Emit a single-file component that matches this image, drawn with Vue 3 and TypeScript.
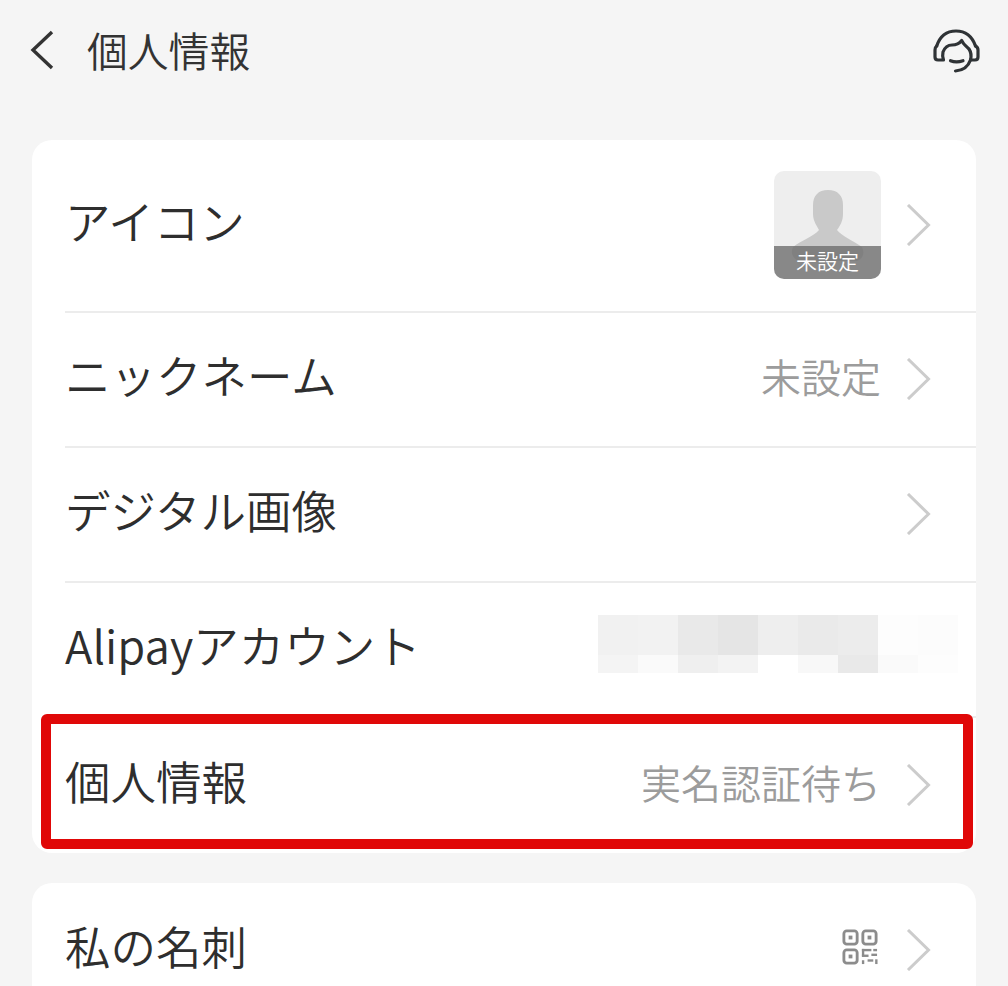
<script setup lang="ts">
interface Row {
  key: string
  label: string
  value?: string
  kind?: 'avatar' | 'mosaic'
  highlight?: boolean
}

const rows: Row[] = [
  { key: 'avatar', label: 'アイコン', kind: 'avatar' },
  { key: 'nick', label: 'ニックネーム', value: '未設定' },
  { key: 'digital', label: 'デジタル画像' },
  { key: 'alipay', label: 'Alipayアカウント', kind: 'mosaic' },
  { key: 'info', label: '個人情報', value: '実名認証待ち', highlight: true },
]

const mosaicTop = ['#f1f1f1', '#f2f2f2', '#e9e9e9', '#e5e5e5', '#eeeeee', '#eaeaea', '#ececec', '#fdfdfd', '#fcfcfc']
const mosaicBottom = ['#f4f4f4', '#fafafa', '#efefef', '#f3f3f3', '#ffffff', '#f8f8f8', '#e9e9e9', '#fafafa', '#fdfdfd']
</script>

<template>
  <div class="page">
    <header class="topbar">
      <svg class="back" viewBox="0 0 24 40" width="24" height="40">
        <path d="M22 2 L3 20 L22 38" fill="none" stroke="#333" stroke-width="3.4" />
      </svg>
      <h1 class="title">個人情報</h1>
      <svg class="service" viewBox="0 0 48 48" width="48" height="48">
        <g fill="none" stroke="#2f3336" stroke-width="3.2" stroke-linecap="round" stroke-linejoin="round">
          <path d="M3.700 20 C7 10 14 5 23 5 C32 5 39 10 42.500 20" />
          <path d="M3.700 20 C2.300 21 2 22 2 24 L2 31 C2 33 3 34 5 34 L10.500 34 C9.500 31 9.500 28 10 26 C12 21 15 19 19 19 C23 19 26 18 28.700 14.500 C30 18 33 20 36 23 C38 26 38.500 30 37.500 34 L42 34 C44 34 45 33 45 31 L45 24 C45 22 44.500 21 42.500 20" />
          <path d="M17.500 34.700 C21 36.200 26 36.200 30 34.700" />
          <path d="M37.500 34 C35 41 30 44.500 22.500 45" />
        </g>
      </svg>
    </header>

    <section class="card">
      <div
        v-for="(row, i) in rows"
        :key="row.key"
        class="row"
        :class="[row.kind ? `row-${row.kind}` : '', { last: i === rows.length - 1 }]"
      >
        <span class="label">{{ row.label }}</span>
        <div class="right">
          <div v-if="row.kind === 'avatar'" class="avatar">
            <svg viewBox="0 0 107 108" width="107" height="108">
              <path
                d="M54 19 C44 19 39 25 39 34 L39 43 C39 50 43 55 45 59 C40 65 28 69 19 76 C16 82 19 88 25 90 L83 90 C89 88 91 82 88 76 C78 69 68 65 63 59 C66 55 69 50 69 43 L69 34 C69 25 64 19 54 19 Z"
                fill="#c9c9c9"
              />
            </svg>
            <span class="avatar-tag">未設定</span>
          </div>
          <div v-else-if="row.kind === 'mosaic'" class="mosaic">
            <i v-for="(c, n) in mosaicTop" :key="'t' + n" class="cell-top" :style="{ background: c }"></i>
            <i v-for="(c, n) in mosaicBottom" :key="'b' + n" class="cell-bottom" :style="{ background: c }"></i>
          </div>
          <span v-else-if="row.value" class="value">{{ row.value }}</span>
          <svg v-if="row.kind !== 'mosaic'" class="chevron" viewBox="0 0 25 42" width="25" height="42">
            <path d="M2 1 L22.500 21 L2 41" fill="none" stroke="#cccccc" stroke-width="3" />
          </svg>
        </div>
        <div v-if="row.highlight" class="highlight"></div>
      </div>
    </section>

    <section class="card second">
      <div class="row row-qr">
        <span class="label">私の名刺</span>
        <div class="right">
          <svg class="qr" viewBox="0 0 38 38" width="36" height="36">
            <g fill="none" stroke="#8c8c8c" stroke-width="3">
              <rect x="2" y="2" width="14" height="14" rx="3" />
              <rect x="22" y="2" width="14" height="14" rx="3" />
              <rect x="2" y="22" width="14" height="14" rx="3" />
            </g>
            <g fill="#8c8c8c">
              <rect x="7" y="7" width="4" height="4" />
              <rect x="27" y="7" width="4" height="4" />
              <rect x="7" y="27" width="4" height="4" />
              <rect x="21" y="21" width="10" height="2.500" />
              <rect x="33" y="21" width="4" height="2.500" />
              <rect x="21" y="21" width="2.500" height="8" />
              <rect x="21" y="27" width="7" height="2.500" />
              <rect x="31" y="26" width="6" height="2.500" />
              <rect x="21" y="33" width="2.500" height="4" />
              <rect x="27" y="32" width="6" height="2.500" />
              <rect x="35" y="32" width="2.500" height="5" />
            </g>
          </svg>
          <svg class="chevron" viewBox="0 0 25 42" width="25" height="42">
            <path d="M2 1 L22.500 21 L2 41" fill="none" stroke="#cccccc" stroke-width="3" />
          </svg>
        </div>
      </div>
    </section>
  </div>
</template>

<style>
html,
body {
  margin: 0;
  background: #f5f5f5;
  overflow: hidden;
}
</style>

<style scoped>
.page {
  height: 986px;
  overflow: hidden;
  background: #f5f5f5;
  font-family: "Noto Sans CJK JP", "Noto Sans", sans-serif;
  font-weight: 350;
  color: #333;
}

.topbar {
  height: 100px;
  margin-bottom: 40px;
  padding: 0 27px 0 30px;
  display: flex;
  align-items: center;
  box-sizing: border-box;
}
.back {
  flex-shrink: 0;
}
.title {
  margin: 0 0 0 33px;
  flex: 1;
  font-size: 40.800px;
  font-weight: 350;
  line-height: 1;
  color: #333;
}

.card {
  margin: 0 32px;
  background: #fff;
  border-radius: 20px;
}
.second {
  margin-top: 30px;
}

.row {
  position: relative;
  height: 135px;
  margin-left: 33px;
  padding-right: 45px;
  padding-bottom: 2px;
  display: flex;
  align-items: center;
  justify-content: space-between;
  box-sizing: border-box;
  border-bottom: 2px solid #ececec;
}
.row.last,
.row-qr {
  border-bottom: none;
}
.row-avatar {
  height: 173px;
}
.row-mosaic {
  padding-right: 18px;
}

.label {
  padding-bottom: 8px;
  font-size: 45.500px;
  line-height: 1;
  color: #2e2e2e;
}

.right {
  display: flex;
  align-items: center;
}
.value {
  padding-bottom: 6px;
  font-size: 40px;
  line-height: 1;
  color: #9c9c9c;
}
.chevron {
  margin-left: 25px;
}
.qr {
  margin: 0 3px 6px 0;
}

.avatar {
  position: relative;
  width: 107px;
  height: 108px;
  border-radius: 10px;
  overflow: hidden;
  background: #eeeeee;
}
.avatar svg {
  display: block;
}
.avatar-tag {
  position: absolute;
  left: 0;
  right: 0;
  bottom: 0;
  height: 33px;
  background: rgba(110, 110, 110, 0.8);
  color: #fff;
  font-size: 21px;
  line-height: 28px;
  text-align: center;
}

.mosaic {
  margin-bottom: 10px;
  display: grid;
  grid-template-columns: repeat(9, 40px);
  grid-template-rows: 40px 18px;
}
.cell-top,
.cell-bottom {
  display: block;
}

.highlight {
  position: absolute;
  left: -24px;
  right: 3px;
  top: -4px;
  bottom: 4px;
  border: 10px solid #e00808;
  border-radius: 6px;
}
</style>
